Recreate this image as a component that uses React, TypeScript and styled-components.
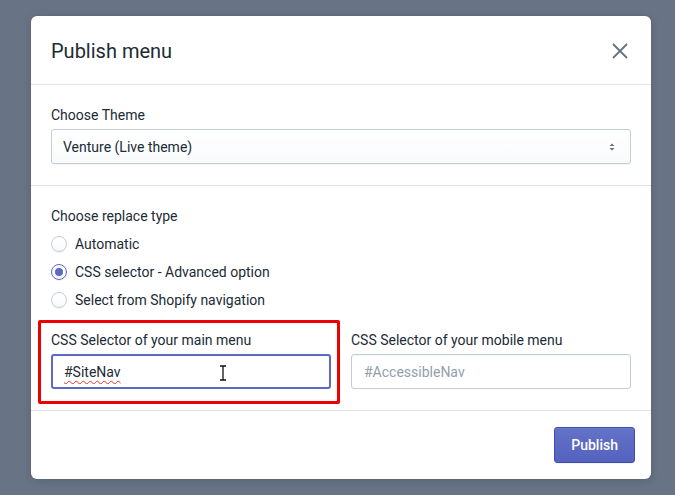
import React from 'react';
import styled, { createGlobalStyle } from 'styled-components';

const Global = createGlobalStyle`
  html, body {
    margin: 0;
    padding: 0;
    background: #687485;
    font-family: Roboto, "Liberation Sans", sans-serif;
    color: #212b36;
  }
  * { box-sizing: border-box; }
`;

const Page = styled.div`
  width: 675px;
  height: 495px;
  padding: 16px 24px 0 31px;
`;

const Modal = styled.div`
  width: 620px;
  background: #fff;
  border-radius: 6px;
  box-shadow: 0 0 0 1px rgba(63, 63, 68, 0.05), 0 2px 8px rgba(0, 0, 0, 0.15);
`;

const Header = styled.div`
  height: 69px;
  display: flex;
  align-items: center;
  justify-content: space-between;
  padding: 1px 21px 0 20px;
  border-bottom: 1px solid #dfe3e8;
`;

const Title = styled.h2`
  margin: 0;
  font-size: 20px;
  font-weight: 400;
  line-height: 24px;
`;

const CloseButton = styled.button`
  border: 0;
  background: none;
  padding: 0;
  width: 20px;
  height: 20px;
  display: flex;
  align-items: center;
  justify-content: center;
  color: #637381;
`;

const Section = styled.div`
  padding: 20px 20px 21px;
  border-bottom: 1px solid #dfe3e8;
`;

const Label = styled.div`
  font-size: 14px;
  line-height: 20px;
  margin-bottom: 4px;
`;

const Select = styled.div`
  height: 35px;
  border: 1px solid #c4cdd5;
  border-radius: 3px;
  background: linear-gradient(180deg, #fff, #f9fafb);
  box-shadow: 0 1px 0 rgba(22, 29, 37, 0.05);
  display: flex;
  align-items: center;
  justify-content: space-between;
  padding: 0 14px 0 11px;
  font-size: 14px;
`;

const RadioRow = styled.label`
  display: flex;
  align-items: center;
  gap: 8px;
  height: 28px;
  font-size: 14px;
`;

const RadioDot = styled.span<{ checked?: boolean }>`
  width: 16px;
  height: 16px;
  border-radius: 50%;
  border: 1px solid ${(p) => (p.checked ? '#5c6ac4' : '#c4cdd5')};
  background: linear-gradient(180deg, #fff, #f9fafb);
  box-shadow: 0 1px 0 rgba(22, 29, 37, 0.05);
  display: flex;
  align-items: center;
  justify-content: center;
  &::after {
    content: '';
    width: 8px;
    height: 8px;
    border-radius: 50%;
    background: #5c6ac4;
    display: ${(p) => (p.checked ? 'block' : 'none')};
  }
`;

const Fields = styled.div`
  display: grid;
  grid-template-columns: 1fr 1fr;
  gap: 20px;
  margin-top: 16px;
`;

const Field = styled.div<{ highlight?: boolean }>`
  position: relative;
  ${(p) =>
    p.highlight
      ? `&::after {
    content: '';
    position: absolute;
    top: -10px;
    left: -13px;
    right: -9px;
    bottom: -15px;
    border: 3px solid #ee0000;
    border-radius: 2px;
    pointer-events: none;
  }`
      : ''}
`;

const Input = styled.div<{ focused?: boolean }>`
  height: 35px;
  border: ${(p) => (p.focused ? '2px solid #5c6ac4' : '1px solid #c4cdd5')};
  border-radius: 3px;
  display: flex;
  align-items: center;
  padding-left: ${(p) => (p.focused ? '11px' : '12px')};
  font-size: 14px;
  position: relative;
  box-shadow: inset 0 1px 0 rgba(99, 115, 129, 0.05);
`;

const Value = styled.span`
  color: #212b36;
  text-decoration: underline wavy #e0362b;
  text-decoration-thickness: 1px;
  text-underline-offset: 3px;
  text-decoration-skip-ink: none;
`;

const Placeholder = styled.span`
  color: #919eab;
`;

const Cursor = styled.svg`
  position: absolute;
  left: 166px;
  top: 9px;
`;

const Footer = styled.div`
  display: flex;
  justify-content: flex-end;
  padding: 16px;
`;

const PrimaryButton = styled.button`
  height: 36px;
  padding: 0 16px;
  border: 1px solid #3f4eae;
  border-radius: 3px;
  background: linear-gradient(180deg, #6371c7, #5563c1);
  box-shadow: inset 0 1px 0 0 #6f7bcb, 0 1px 0 0 rgba(22, 29, 37, 0.05);
  color: #fff;
  font-family: Roboto, "Liberation Sans", sans-serif;
  font-size: 14px;
  font-weight: 500;
`;

export default function App() {
  return (
    <Page>
      <Global />
      <Modal>
        <Header>
          <Title>Publish menu</Title>
          <CloseButton>
            <svg width="18" height="18" viewBox="0 0 18 18">
              <path d="M2 2 L16 16 M16 2 L2 16" stroke="#637381" strokeWidth="1.8" />
            </svg>
          </CloseButton>
        </Header>
        <Section>
          <Label>Choose Theme</Label>
          <Select>
            <span>Venture (Live theme)</span>
            <svg width="8" height="12" viewBox="0 0 8 12">
              <path d="M4 2.5 L6.5 5 H1.5 Z M4 9.5 L6.5 7 H1.5 Z" fill="#637381" />
            </svg>
          </Select>
        </Section>
        <Section>
          <Label>Choose replace type</Label>
          <RadioRow>
            <RadioDot />
            Automatic
          </RadioRow>
          <RadioRow>
            <RadioDot checked />
            CSS selector - Advanced option
          </RadioRow>
          <RadioRow>
            <RadioDot />
            Select from Shopify navigation
          </RadioRow>
          <Fields>
            <Field highlight>
              <Label>CSS Selector of your main menu</Label>
              <Input focused>
                <Value>#SiteNav</Value>
                <Cursor width="8" height="16" viewBox="0 0 8 16">
                  <path d="M1 1 H7 M4 1 V15 M1 15 H7" stroke="#111" strokeWidth="1.3" fill="none" />
                </Cursor>
              </Input>
            </Field>
            <Field>
              <Label>CSS Selector of your mobile menu</Label>
              <Input>
                <Placeholder>#AccessibleNav</Placeholder>
              </Input>
            </Field>
          </Fields>
        </Section>
        <Footer>
          <PrimaryButton>Publish</PrimaryButton>
        </Footer>
      </Modal>
    </Page>
  );
}
